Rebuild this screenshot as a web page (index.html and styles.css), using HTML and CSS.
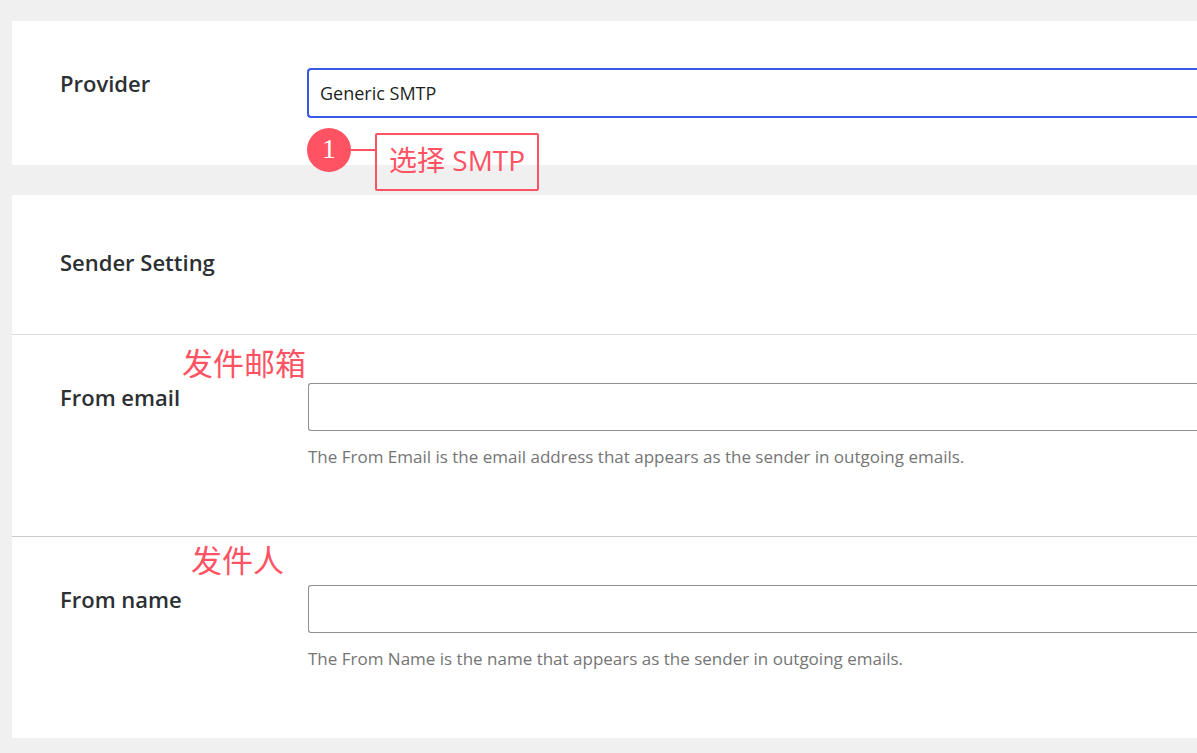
FILE: index.html
```html
<!DOCTYPE html>
<html lang="en">
<head>
<meta charset="utf-8">
<meta name="viewport" content="width=device-width, initial-scale=1">
<title>SMTP settings</title>
<link rel="stylesheet" href="styles.css">
</head>
<body>
<main class="page">
  <section class="panel">
    <div class="row row-compact">
      <label class="label" for="provider">Provider</label>
      <div class="field">
        <select class="control control-active" id="provider">
          <option>Generic SMTP</option>
        </select>
      </div>
    </div>
    <div class="callout">
      <span class="callout-number">1</span>
      <span class="callout-line"></span>
      <span class="callout-text" lang="zh-CN">选择 SMTP</span>
    </div>
  </section>
  <section class="panel">
    <h2 class="heading">Sender Setting</h2>
    <div class="row">
      <label class="label" for="from-email">From email</label>
      <div class="field">
        <input class="control" id="from-email" type="email">
        <p class="hint">The From Email is the email address that appears as the sender in outgoing emails.</p>
      </div>
      <span class="note note-email" lang="zh-CN">发件邮箱</span>
    </div>
    <div class="row">
      <label class="label" for="from-name">From name</label>
      <div class="field">
        <input class="control" id="from-name" type="text">
        <p class="hint">The From Name is the name that appears as the sender in outgoing emails.</p>
      </div>
      <span class="note note-name" lang="zh-CN">发件人</span>
    </div>
  </section>
</main>
</body>
</html>
```

FILE: styles.css
```css
* {
  box-sizing: border-box;
}

body {
  margin: 0;
  background: #f0f0f0;
  color: #2c3033;
  font-family: "Open Sans", "Noto Sans CJK SC", sans-serif;
  font-size: 18px;
}

.page {
  display: flex;
  flex-direction: column;
  gap: 30px;
  padding: 21px 0 15px 12px;
}

.panel {
  position: relative;
  background: #fff;
}

.heading {
  margin: 0;
  padding: 48px 48px 53px;
  font-size: 22px;
  font-weight: 600;
  line-height: 38px;
}

.row {
  position: relative;
  display: grid;
  grid-template-columns: 248px minmax(0, 1fr);
  padding: 48px 0 66px 48px;
}

.heading + .row {
  border-top: 1px solid #dcdcde;
}

.row + .row {
  border-top: 1px solid #c9cacb;
}

.row-compact {
  padding-bottom: 48px;
}

.label {
  font-size: 22px;
  font-weight: 600;
  line-height: 28px;
}

.control {
  display: block;
  width: 100%;
  height: 48px;
  padding: 0 12px;
  border: 1px solid #8c8f94;
  border-right: 0;
  border-radius: 3px 0 0 3px;
  background: #fff;
  color: #1d1f21;
  font: inherit;
  appearance: none;
  outline: none;
}

.control-active {
  border-color: #3858e9;
  box-shadow: 0 0 0 1px #3858e9;
  padding: 0 11px;
}

.hint {
  margin: 12px 0 0;
  color: #757575;
  font-size: 17px;
  line-height: 27px;
}

/* Annotations laid over the form */
.callout {
  position: absolute;
  top: 107px;
  left: 295px;
  z-index: 1;
  display: flex;
  align-items: flex-start;
  color: #ff5263;
}

.callout-number {
  width: 44px;
  height: 44px;
  border-radius: 50%;
  background: #ff5263;
  color: #fff;
  font-family: "Liberation Serif", serif;
  font-size: 28px;
  line-height: 42px;
  text-align: center;
}

.callout-line {
  width: 24px;
  height: 2px;
  margin-top: 21px;
  background: #ff5263;
}

.callout-text {
  margin-top: 5px;
  padding: 0 12px 4px;
  border: 2px solid #ff5263;
  border-radius: 2px;
  font-size: 28px;
  line-height: 50px;
  white-space: nowrap;
}

.note {
  position: absolute;
  color: #ff5263;
  font-size: 31px;
  line-height: 40px;
  white-space: nowrap;
}

.note-email {
  top: 8px;
  left: 170px;
}

.note-name {
  top: 3px;
  left: 179px;
}
```
